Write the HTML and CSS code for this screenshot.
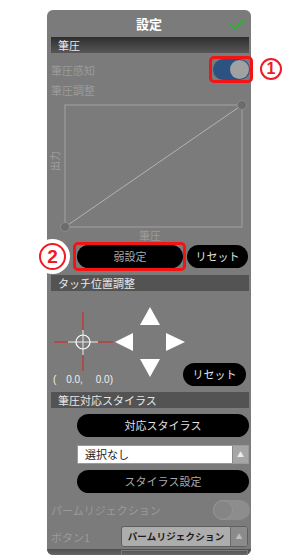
FILE: index.html
```html
<!DOCTYPE html>
<html lang="ja">
<head>
<meta charset="utf-8">
<title>設定</title>
<link rel="stylesheet" href="styles.css">
</head>
<body>
<div class="panel">
  <div class="titlebar">
    <span></span>
    <h1 class="title">設定</h1>
    <svg class="check" width="16" height="11" viewBox="0 0 16 11"><polyline points="1,5 5.5,10 15,1" fill="none" stroke="#22b82c" stroke-width="1.8"/></svg>
  </div>

  <div class="sec sec-first">筆圧</div>

  <div class="row row-sense">
    <span class="label dis">筆圧感知</span>
    <span class="hl">
      <span class="toggle on"><span class="knob"></span></span>
      <span class="badge b1">1</span>
    </span>
  </div>

  <div class="label dis sub">筆圧調整</div>

  <div class="graph">
    <span class="ylabel">出力</span>
    <svg width="187" height="129" viewBox="0 0 187 129">
      <rect x="5" y="5" width="177" height="122" fill="none" stroke="#a3a3a3" stroke-width="1"/>
      <line x1="5" y1="127" x2="182" y2="5" stroke="#b3b3b3" stroke-width="1"/>
      <circle cx="5" cy="127" r="4.5" fill="#6c6c6c" stroke="#8c8c8c"/>
      <circle cx="182" cy="5" r="4.5" fill="#6c6c6c" stroke="#8c8c8c"/>
    </svg>
  </div>
  <div class="xlabel">筆圧</div>

  <div class="btnrow">
    <span class="hl">
      <button class="pill wide dim">弱設定</button>
      <span class="badge b2">2</span>
    </span>
    <button class="pill reset">リセット</button>
  </div>

  <div class="sec sec-touch">タッチ位置調整</div>

  <div class="touch">
    <div class="cross-col">
      <svg width="60" height="60" viewBox="0 0 60 60">
        <g stroke="#c23a36" stroke-width="1.4">
          <line x1="30" y1="0" x2="30" y2="18"/>
          <line x1="30" y1="43" x2="30" y2="59"/>
          <line x1="1" y1="30" x2="15" y2="30"/>
          <line x1="45" y1="30" x2="60" y2="30"/>
        </g>
        <g stroke="#ececec" stroke-width="1">
          <line x1="30" y1="18" x2="30" y2="43"/>
          <line x1="15" y1="30" x2="45" y2="30"/>
        </g>
        <circle cx="30" cy="30" r="7" fill="none" stroke="#fff" stroke-width="1.2"/>
      </svg>
      <div class="coord"><span class="c0">(</span><span class="c1">0.0,</span><span class="c2">0.0)</span></div>
    </div>
    <svg class="arrows" width="68" height="70" viewBox="0 0 68 70">
      <polygon points="35,0 45,18 25,18" fill="#fff"/>
      <polygon points="0,35 18,26 18,44" fill="#fff"/>
      <polygon points="70,35 51,26 51,44" fill="#fff"/>
      <polygon points="35,70 25,52 45,52" fill="#fff"/>
    </svg>
    <button class="pill reset2">リセット</button>
  </div>

  <div class="sec">筆圧対応スタイラス</div>

  <button class="pill full first">対応スタイラス</button>
  <div class="select">
    <span class="sel-text">選択なし</span>
    <span class="sel-arrow">▲</span>
  </div>
  <button class="pill full dim">スタイラス設定</button>

  <div class="row palm">
    <span class="label dis">パームリジェクション</span>
    <span class="toggle off"><span class="knob"></span></span>
  </div>

  <div class="row btn1">
    <span class="label dis">ボタン1</span>
    <div class="dropdown">
      <span class="dd-text">パームリジェクション</span>
      <span class="dd-arrow">▲</span>
    </div>
  </div>

  <div class="foot"><span class="foot-box"></span></div>
</div>
</body>
</html>
```

FILE: styles.css
```css
* {
  box-sizing: border-box;
  margin: 0;
  padding: 0;
}

body {
  background: #fff;
  font-family: "Noto Sans CJK JP", "Noto Sans", sans-serif;
}

.panel {
  position: relative;
  margin: 10px 0 0 47px;
  width: 204px;
  height: 545px;
  background: #7b7b7b;
  border-radius: 6px;
  display: flex;
  flex-direction: column;
}

/* title */
.titlebar {
  height: 27px;
  display: grid;
  grid-template-columns: 1fr auto 1fr;
  align-items: center;
}
.title {
  font-size: 13px;
  font-weight: bold;
  color: #fff;
  line-height: 16px;
}
.check {
  justify-self: end;
  margin-right: 6px;
  margin-top: 2px;
}

/* section headers */
.sec {
  height: 16px;
  margin: 0 2px 0 4px;
  padding-left: 7px;
  font-size: 11px;
  line-height: 16px;
  color: #e8e8e8;
  background: #535353;
}
.sec-first {
  background: linear-gradient(#2e2e2e, #575757);
}
.sec-touch {
  margin-top: 7px;
}

/* rows */
.row {
  display: flex;
  align-items: center;
  justify-content: space-between;
  padding-left: 4px;
  padding-right: 1px;
}
.row-sense {
  margin-top: 6px;
  height: 21px;
}
.label {
  font-size: 11px;
  line-height: 14px;
}
.dis {
  color: #9a9a9a;
}
.sub {
  margin-top: 3px;
  padding-left: 4px;
}

/* toggles */
.toggle {
  display: flex;
  align-items: center;
  width: 37px;
  height: 21px;
  border-radius: 11px;
  padding: 1px;
}
.toggle.on {
  background: #2c5282;
  justify-content: flex-end;
}
.toggle.on .knob {
  width: 19px;
  height: 19px;
  border-radius: 50%;
  background: #a1a1a1;
}
.toggle.off {
  height: 20px;
  background: #8d8d8d;
  justify-content: flex-start;
  padding: 0;
}
.toggle.off .knob {
  width: 20px;
  height: 20px;
  border-radius: 50%;
  background: #858585;
  border: 1px solid #969696;
}

/* annotation highlights */
.hl {
  position: relative;
  display: flex;
}
.hl::after {
  content: "";
  position: absolute;
  top: -3px;
  right: -3px;
  bottom: -3px;
  left: -4px;
  border: 3px solid #f31515;
  border-radius: 5px;
  pointer-events: none;
}
.badge {
  position: absolute;
  display: flex;
  align-items: center;
  justify-content: center;
  border-radius: 50%;
  border: 2px solid #ee1c25;
  background: #fff;
  color: #ee1c25;
  font-family: "Liberation Sans", sans-serif;
  font-weight: bold;
}
.b1 {
  left: calc(100% + 10px);
  top: -1px;
  width: 22px;
  height: 22px;
  font-size: 16px;
}
.b2 {
  left: -38px;
  top: -2px;
  width: 27px;
  height: 27px;
  font-size: 19px;
  box-shadow: 0 0 0 4px #fff;
}

/* graph */
.graph {
  display: flex;
  align-items: center;
  margin-top: 3px;
  height: 129px;
}
.ylabel {
  width: 10px;
  margin-left: 3px;
  font-size: 10px;
  line-height: 10px;
  color: #a0a0a0;
  writing-mode: vertical-rl;
  text-orientation: sideways;
  transform: rotate(180deg);
  margin-top: -8px;
}
.graph svg {
  overflow: visible;
}
.xlabel {
  text-align: center;
  padding-left: 2px;
  font-size: 11px;
  line-height: 12px;
  color: #9a9a9a;
}

/* buttons */
.btnrow {
  display: flex;
  gap: 4px;
  margin-top: 4px;
  padding-left: 30px;
  height: 23px;
}
.pill {
  height: 23px;
  border: none;
  border-radius: 12px;
  background: #000;
  color: #e2e2e2;
  font-family: "Noto Sans CJK JP", "Noto Sans", sans-serif;
  font-size: 11px;
  line-height: 23px;
}
.pill.dim {
  color: #a9a9a9;
}
.wide {
  width: 106px;
}
.reset {
  width: 61px;
}

/* touch position */
.touch {
  display: flex;
  height: 101px;
}
.cross-col {
  margin-left: 6px;
  padding-top: 21px;
  width: 60px;
}
.cross-col svg {
  display: block;
}
.coord {
  display: flex;
  margin-top: 2px;
  font-family: "Liberation Sans", sans-serif;
  font-size: 10px;
  line-height: 12px;
  color: #f0f0f0;
  white-space: nowrap;
}
.c0 {
  width: 16px;
}
.c1 {
  width: 36px;
}
.arrows {
  margin-left: 2px;
  margin-top: 16px;
  overflow: visible;
}
.reset2 {
  width: 63px;
  margin-left: auto;
  margin-right: 5px;
  align-self: flex-end;
  margin-bottom: 6px;
}

/* stylus section */
.full {
  width: 172px;
  margin: 6px 2px 0 30px;
}
.select {
  display: flex;
  height: 19px;
  margin: 8px 2px 0 30px;
  border: 1px solid #9a9a9a;
  background: #fff;
}
.sel-text {
  flex: 1;
  padding-left: 7px;
  font-size: 11px;
  line-height: 17px;
  color: #222;
}
.sel-arrow {
  width: 16px;
  background: #a6a6a6;
  border-left: 1px solid #8a8a8a;
  color: #ececec;
  font-size: 7px;
  line-height: 17px;
  text-align: center;
}

.palm {
  margin-top: 7px;
  height: 20px;
}
.btn1 {
  margin-top: 6px;
  height: 21px;
  padding-right: 3px;
}
.dropdown {
  display: flex;
  width: 127px;
  height: 21px;
  border: 1px solid #5f5f5f;
  border-radius: 3px;
  background: #adadad;
  overflow: hidden;
}
.dd-text {
  flex: 1;
  text-align: center;
  font-size: 9.5px;
  font-weight: bold;
  line-height: 19px;
  color: #1c1c1c;
  letter-spacing: 0.2px;
}
.dd-arrow {
  width: 17px;
  background: #8b8b8b;
  border-left: 1px solid #6a6a6a;
  color: #bdbdbd;
  font-size: 7px;
  line-height: 19px;
  text-align: center;
}

.foot {
  flex: 1;
  margin-top: 2px;
  background: linear-gradient(#4e4e4e, #676767);
  border-radius: 0 0 6px 6px;
  display: flex;
  justify-content: flex-end;
  padding-right: 3px;
}
.foot-box {
  width: 127px;
  border: 1px solid #7a7a7a;
  border-bottom: none;
  margin-top: 1px;
}
```
